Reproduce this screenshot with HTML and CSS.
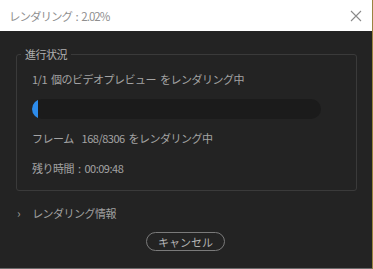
FILE: index.html
```html
<!DOCTYPE html>
<html>
<head>
<meta charset="utf-8">
<meta name="viewport" content="width=device-width, initial-scale=1">
<link rel="stylesheet" href="styles.css">
</head>
<body>

<div class="dialog">
  <div class="titlebar">
    <span class="title">レンダリング : 2.02%</span>
    <svg class="close" width="12" height="12" viewBox="0 0 12 12">
      <path d="M1 1 L11 11 M11 1 L1 11" stroke="#8a8a8a" stroke-width="1.1" fill="none"/>
    </svg>
  </div>

  <div class="content">
    <fieldset class="progress-box">
      <legend>進行状況</legend>
      <p class="line first">1/1 個のビデオプレビュー をレンダリング中</p>
      <div class="bar"><div class="fill" style="width: 2.02%;"></div></div>
      <p class="line">フレーム&nbsp; 168/8306 をレンダリング中</p>
      <p class="line">残り時間 : 00:09:48</p>
    </fieldset>

    <div class="info">
      <span class="chev">›</span>
      <span>レンダリング情報</span>
    </div>

    <div class="actions">
      <button class="cancel">キャンセル</button>
    </div>
  </div>
</div>

</body>
</html>
```

FILE: styles.css
```css
html, body {
  margin: 0;
  height: 100%;
}

body {
  background: linear-gradient(to right, #6b6b6b 0, #6b6b6b 372px, #9a8440 372px);
  font-family: "Noto Sans CJK JP", "Noto Sans", sans-serif;
}

.dialog {
  width: 372px;
  height: 268px;
  background-color: #232323;
  display: flex;
  flex-direction: column;
}

.titlebar {
  height: 31px;
  background-color: #ffffff;
  display: flex;
  align-items: center;
  justify-content: space-between;
  padding: 0 10px 0 9px;
  box-sizing: border-box;
}

.title {
  color: #8f8f8f;
  font-size: 11.5px;
  letter-spacing: -1px;
  word-spacing: 2px;
}

.close {
  margin-top: 1px;
}

.content {
  padding: 16px 15px 0 16px;
}

.progress-box {
  margin: 0;
  border: 1px solid #3a3a3a;
  border-radius: 3px;
  padding: 0 0 14px 15px;
  min-width: 0;
}

.progress-box legend {
  color: #b0b0b0;
  font-size: 11px;
  letter-spacing: -0.5px;
  padding: 0 4px;
  margin-left: -11px;
  line-height: 14px;
}

.line {
  margin: 0;
  color: #a4a4a4;
  font-size: 11px;
  letter-spacing: -0.5px;
  word-spacing: 2px;
  line-height: 16px;
}

.line.first {
  margin-top: 10px;
}

.bar {
  width: 289px;
  height: 20px;
  margin: 12px 0 11px;
  background-color: #1b1b1b;
  border-radius: 10px;
  overflow: hidden;
}

.fill {
  height: 100%;
  background-color: #2d8cec;
}

.bar + .line {
  margin-bottom: 14px;
}

.info {
  display: flex;
  align-items: center;
  gap: 12px;
  margin: 14px 0 0 1px;
  color: #a0a0a0;
  font-size: 11px;
  letter-spacing: -0.5px;
  line-height: 16px;
}

.chev {
  font-size: 12px;
  color: #9a9a9a;
}

.actions {
  display: flex;
  justify-content: center;
  margin-top: 11px;
  padding-right: 2px;
}

.cancel {
  width: 79px;
  height: 19px;
  background: transparent;
  border: 1px solid #7a7a7a;
  border-radius: 10px;
  color: #b4b4b4;
  font-family: "Noto Sans CJK JP", sans-serif;
  font-size: 11px;
  padding: 0;
  line-height: 16px;
}
```
